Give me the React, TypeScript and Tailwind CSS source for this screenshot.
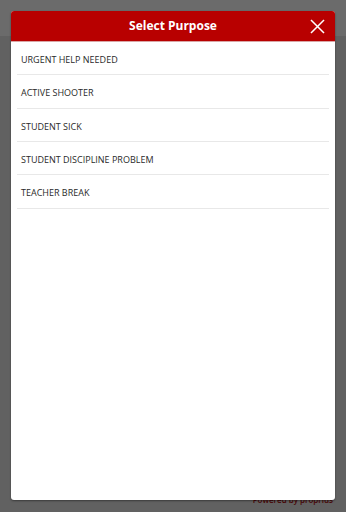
import React from "react";

const items = [
  "URGENT HELP NEEDED",
  "ACTIVE SHOOTER",
  "STUDENT SICK",
  "STUDENT DISCIPLINE PROBLEM",
  "TEACHER BREAK",
];

export default function App() {
  return (
    <div
      className="relative w-[346px] h-[512px] overflow-hidden bg-[#616161]"
      style={{ fontFamily: '"Open Sans", "Noto Sans", sans-serif' }}
    >
      <div className="h-[36px] bg-[#6b6b6b]" />
      <div className="absolute right-[13px] top-[495px] text-[8px] leading-[10px] text-[#4a0606] font-semibold">
        Powered by proprius
      </div>
      <div className="absolute left-[11px] top-[11px] w-[324px] h-[489px] bg-white rounded-[3px] shadow-[0_1px_2px_rgba(0,0,0,0.4)] flex flex-col overflow-hidden">
        <div className="relative h-[31px] bg-[#b80000] border-b border-[#d9a6a6] flex items-center justify-center">
          <span className="text-white text-[12px] font-bold">Select Purpose</span>
          <svg
            className="absolute right-[10px] top-[8px]"
            width="15"
            height="15"
            viewBox="0 0 15 15"
            fill="none"
            stroke="white"
            strokeWidth="1.5"
            strokeLinecap="square"
          >
            <path d="M1.5 1.5 L13.5 13.5 M13.5 1.5 L1.5 13.5" />
          </svg>
        </div>
        <div className="flex flex-col px-[6px]">
          {items.map((t) => (
            <div
              key={t}
              className="h-[33.33px] border-b-[1.5px] border-[#e8e8e8] flex items-center pl-[4px] pt-[3px] text-[9px] text-[#2a2a2a]"
            >
              {t}
            </div>
          ))}
        </div>
      </div>
    </div>
  );
}
